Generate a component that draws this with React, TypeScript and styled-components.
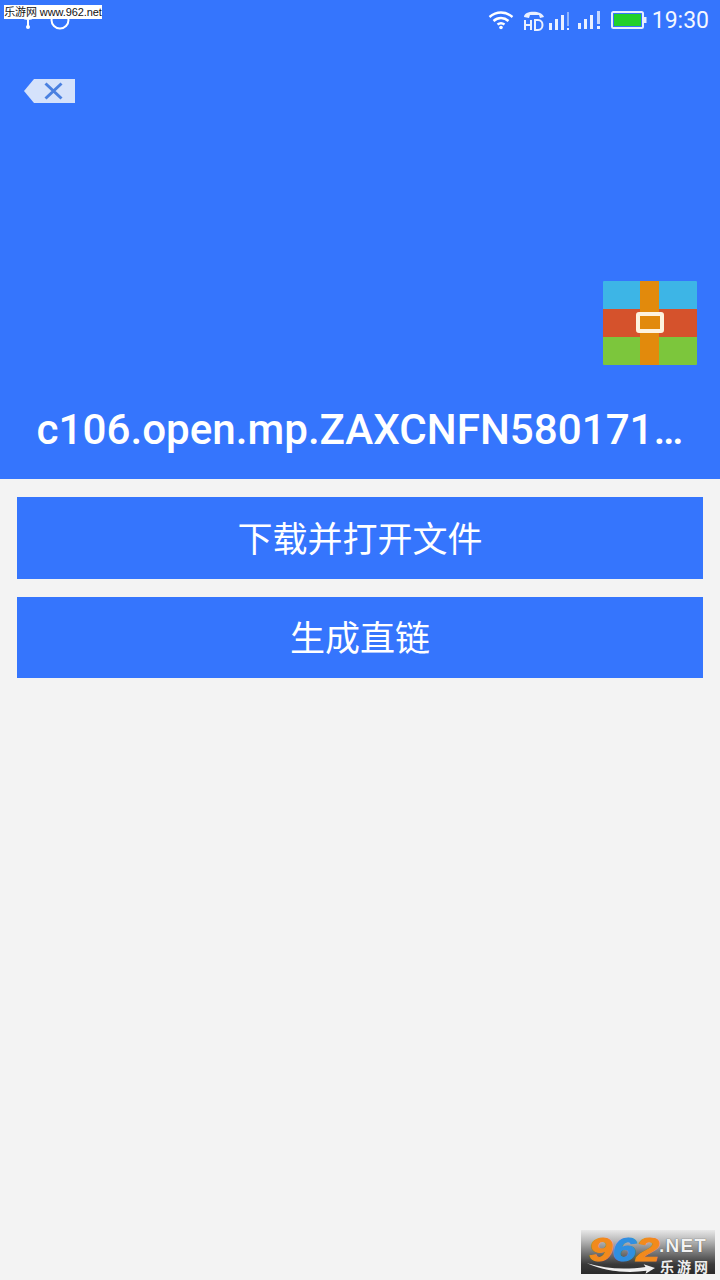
import React from "react";
import styled, { createGlobalStyle } from "styled-components";

const Global = createGlobalStyle`
  html, body { margin: 0; padding: 0; background: #f3f3f3; }
  #root { width: 720px; height: 1280px; }
`;
const Page = styled.div`
  position: relative; width: 720px; height: 1280px; overflow: hidden;
  background: #f3f3f3; display: flex; flex-direction: column;
  font-family: Roboto, "Noto Sans CJK SC", sans-serif;
`;
const Header = styled.header`
  height: 479px; background: #3575fd; display: flex; flex-direction: column; flex-shrink: 0;
`;
const StatusBar = styled.div`
  height: 40px; display: flex; align-items: center; padding: 0 11px 0 20px; color: #fff;
`;
const StatusLeft = styled.div`
  display: flex; align-items: center; gap: 14px; flex: 1;
`;
const StatusRight = styled.div`
  display: flex; align-items: center;
`;
const Clock = styled.span`
  font-size: 23px; margin-left: 5px; color: #f4f7ff; font-family: Roboto, sans-serif;
`;
const BackButton = styled.div`
  margin: 38px 0 0 24px; width: 52px; height: 26px; display: flex;
`;
const IconRow = styled.div`
  display: flex; justify-content: flex-end; padding-right: 23px; margin-top: 177px;
`;
const Title = styled.h1`
  margin: 41px 0 0; padding: 0 20px; text-align: center; color: #fff; white-space: nowrap;
  font-size: 42.15px; line-height: 48px; font-weight: 500; font-family: Roboto, sans-serif;
`;
const Actions = styled.div`
  display: flex; flex-direction: column; gap: 18px; padding: 18px 17px 0;
`;
const ActionButton = styled.button`
  height: 81.5px; border: 0; padding: 0 0 3px; background: #3575fd; color: #fff; font-size: 35px;
  font-family: "Noto Sans CJK SC", sans-serif; font-weight: 400;
`;
const TopMark = styled.div`
  position: absolute; left: 4px; top: 5px; width: 98px; height: 14px; background: #fff; color: #111;
  font: 11px/14px "Liberation Sans", "Noto Sans CJK SC", sans-serif; white-space: nowrap; text-align: center;
  letter-spacing: -0.1px;
`;
const Logo = styled.div`
  position: absolute; left: 581px; top: 1230px; width: 134px; height: 44px;
  background: linear-gradient(180deg, #e8e8e8 0%, #bcbcbc 22%, #7a7a7a 50%, #3a3a3a 78%, #2a2a2a 100%);
`;
const LogoNum = styled.span`
  position: absolute; left: 8px; top: 3px; font: italic 700 33px/33px "Liberation Sans", sans-serif;
  color: #f28a1c; transform: scaleX(1.28); transform-origin: left center; -webkit-text-stroke: 1px #f28a1c;
`;
const LogoBlue = styled.span`color: #2f8fe0; -webkit-text-stroke: 1px #2f8fe0;`;
const LogoNet = styled.span`
  position: absolute; left: 78px; top: 6px; font: 700 19px/20px "Liberation Sans", sans-serif;
  color: #f2f2f2; letter-spacing: 1.2px; text-shadow: 0 0 1px #333;
`;
const LogoCn = styled.span`
  position: absolute; left: 79px; top: 28px; font: 700 14px/16px "Noto Sans CJK SC", sans-serif;
  color: #efefef; letter-spacing: 3px;
`;
const Swoosh = styled.svg`
  position: absolute; left: 6px; top: 32px;
`;

export default function App() {
  return (
    <Page>
      <Global />
      <Header>
        <StatusBar>
          <StatusLeft>
            <svg width="16" height="20" viewBox="0 0 16 20" fill="none" stroke="#fff" strokeWidth="2">
              <path d="M1 2c0 5 3 7 7 7s7-2 7-7M8 4v12" />
              <circle cx="8" cy="17" r="2" fill="#fff" stroke="none" />
            </svg>
            <svg width="20" height="20" viewBox="0 0 20 20" fill="none" stroke="#fff" strokeWidth="2">
              <circle cx="10" cy="10" r="8.500" />
              <path d="M5.500 8h1.500M9.300 8h1.500M13 8h1.500" strokeWidth="1.600" />
            </svg>
          </StatusLeft>
          <StatusRight>
            <svg width="26" height="20" viewBox="0 0 26 20" fill="none" stroke="#fff" strokeWidth="2.400">
              <path d="M1.500 7c7-6 16-6 23 0M5.500 11c4.500-4 10.500-4 15 0M9.500 14.500c2-1.500 5-1.500 7 0" />
              <circle cx="13" cy="17.500" r="1.800" fill="#fff" stroke="none" />
            </svg>
            <svg style={{ marginLeft: 8 }} width="48" height="24" viewBox="0 0 48 24" fill="none" stroke="#eaf0ff">
              <path d="M2 9c0-7 18-7 20 0l-4 1-1-3H8l-1 3z" fill="#eaf0ff" stroke="none" />
              <path d="M3 12v10M3 17h6M9 12v10M13 12v10h3c6 0 6-10 0-10z" strokeWidth="2" />
              <path d="M27 15h3v7h-3zM33 11h3v11h-3zM39 7h3v15h-3z" fill="#eaf0ff" stroke="none" />
              <path d="M45 4h2v14h-2z" fill="#8fb4fb" stroke="none" />
              <path d="M45 20h2v2h-2z" fill="#eaf0ff" stroke="none" />
            </svg>
            <svg style={{ marginLeft: 8 }} width="23" height="20" viewBox="0 0 23 20">
              <path d="M0 13h3v6H0zM6 9h3v10H6zM12 5h3v14h-3z" fill="#eaf0ff" />
              <path d="M19 1h3v13h-3z" fill="#c4d6fd" />
              <path d="M19 16h3v3h-3z" fill="#eaf0ff" />
            </svg>
            <svg style={{ marginLeft: 10 }} width="36" height="20" viewBox="0 0 36 20">
              <rect x="1" y="2" width="31" height="16" rx="1.500" fill="none" stroke="#e6eeff" strokeWidth="2" />
              <rect x="3" y="4" width="27" height="12" fill="#22d02c" />
              <rect x="33" y="7" width="2.500" height="6" fill="#e6eeff" />
            </svg>
            <Clock>19:30</Clock>
          </StatusRight>
        </StatusBar>
        <BackButton>
          <svg width="52" height="26" viewBox="0 0 52 26">
            <path d="M10 1h41v24H10L0 13z" fill="#d5e2fb" />
            <path d="M21.500 5.500l16 15M37.500 5.500l-16 15" stroke="#4a80e0" strokeWidth="3" fill="none" />
          </svg>
        </BackButton>
        <IconRow>
          <svg width="94" height="84" viewBox="0 0 94 84">
            <path d="M1 0h92a1 1 0 0 1 1 1v27H0V1a1 1 0 0 1 1-1z" fill="#3db5e6" />
            <rect y="28" width="94" height="28" fill="#d5522c" />
            <path d="M0 56h94v27a1 1 0 0 1-1 1H1a1 1 0 0 1-1-1z" fill="#7cc63c" />
            <rect x="37" width="19" height="84" fill="#e28a0c" />
            <rect x="35" y="33" width="24" height="17" rx="1" fill="#e28a0c" stroke="#fdf3e0" strokeWidth="4" />
          </svg>
        </IconRow>
        <Title>c106.open.mp.ZAXCNFN580171…</Title>
      </Header>
      <Actions>
        <ActionButton>下载并打开文件</ActionButton>
        <ActionButton>生成直链</ActionButton>
      </Actions>
      <TopMark>乐游网 www.962.net</TopMark>
      <Logo>
        <LogoNum>9<LogoBlue>6</LogoBlue>2</LogoNum>
        <LogoNet>.NET</LogoNet>
        <LogoCn>乐游网</LogoCn>
        <Swoosh width="68" height="12" viewBox="0 0 72 12">
          <path d="M0 1c20 6 40 7 62 4l-2-3 12 4-10 6 1-3C40 12 18 9 0 1z" fill="#f0f0f0" />
        </Swoosh>
      </Logo>
    </Page>
  );
}
